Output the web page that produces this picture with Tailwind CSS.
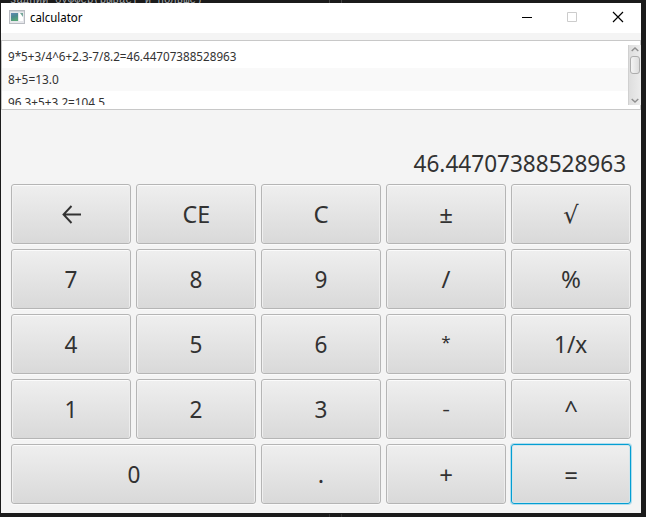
<!DOCTYPE html>
<html lang="en">
<head>
<meta charset="utf-8">
<title>calculator</title>
<script src="https://cdn.jsdelivr.net/npm/@tailwindcss/browser@4"></script>
</head>
<body class="w-[646px] h-[517px] overflow-hidden bg-[#1b1b1b] font-['Noto_Sans','DejaVu_Sans',sans-serif] text-[#323232]">
<div class="relative h-[517px] pt-[3px] pl-px">
  <div class="absolute left-0 top-0 h-[3px] w-[210px] overflow-hidden whitespace-pre font-['Liberation_Mono',monospace] text-[10.7px] leading-[12px] text-[#a4a9ae]"><div class="-mt-[6px] pl-[10px]">задний буффер(рывает и польше)</div></div>
  <div class="absolute left-[329px] top-0 h-[3px] w-[13px] border-x border-[#444]"></div>
  <div class="absolute left-[329px] top-[514px] h-[3px] w-[13px] border-x border-[#333]"></div>
  <main class="relative flex h-[510px] w-[640px] flex-col bg-[#f4f4f4]">
    <header class="flex h-[30px] shrink-0 items-center bg-white pl-2 text-black">
      <svg class="mr-[5px] -mt-[2px]" width="16" height="14" viewBox="0 0 16 14">
        <defs><linearGradient id="scene" x1="0" y1="0" x2="0.3" y2="1"><stop offset="0" stop-color="#6389b6"/><stop offset=".5" stop-color="#4c8990"/><stop offset="1" stop-color="#57a477"/></linearGradient></defs>
        <rect x=".5" y=".5" width="15" height="13" fill="#e6e7eb" stroke="#b9bcc2"/>
        <rect x="1" y="1" width="14" height="1" fill="#d1d4d9"/>
        <rect x="2" y="3" width="7" height="8" fill="url(#scene)"/>
        <rect x="10" y="3" width="4" height="8" fill="#fff"/>
        <path d="M11 3h3v4z" fill="#75a799"/>
      </svg>
      <span class="origin-left scale-x-[.95] text-[12px] leading-4">calculator</span>
      <svg class="ml-auto mr-[17px] -mt-[2px]" width="103" height="12" viewBox="0 0 103 12" fill="none">
        <path d="M1 6.5h10" stroke="#000"/>
        <path d="M46.5 1.5h9v9h-9z" stroke="#ccc"/>
        <path d="M92 1l10 10M102 1L92 11" stroke="#000" stroke-width="1.2"/>
      </svg>
    </header>
    <section class="mt-[7px] flex h-[70px] shrink-0 border border-[#c8c8c8] bg-white py-1 pl-0">
      <div class="h-[60px] grow overflow-hidden text-[12px] leading-[23px]">
        <div class="h-[23px] pl-[6px]"><span class="inline-block origin-left scale-x-[.972]">9*5+3/4^6+2.3-7/8.2=46.44707388528963</span></div>
        <div class="h-[23px] bg-[#f9f9f9] pl-[6px]"><span class="inline-block origin-left scale-x-[.99]">8+5=13.0</span></div>
        <div class="h-[23px] pl-[6px]"><span class="inline-block origin-left scale-x-[.98]">96.3+5+3.2=104.5</span></div>
      </div>
      <div class="-mr-px flex h-[60px] w-[13px] shrink-0 flex-col items-center border-l border-[#d0d0d0] bg-linear-to-r from-[#dedede] to-[#ececec]">
        <svg class="mt-[2px] shrink-0" width="8" height="5" viewBox="0 0 8 5" fill="none" stroke="#8f8f8f" stroke-width="1.4"><path d="M.7 4L4 1l3.3 3"/></svg>
        <div class="mt-1 h-[18px] w-[10px] shrink-0 rounded-[3px] border border-[#adadad] bg-linear-to-r from-[#f4f4f4] to-[#dddddd]"></div>
        <svg class="mt-auto mb-[2px] shrink-0" width="8" height="5" viewBox="0 0 8 5" fill="none" stroke="#8f8f8f" stroke-width="1.4"><path d="M.7 1L4 4l3.3-3"/></svg>
      </div>
    </section>
    <div class="flex h-[74px] shrink-0 items-end justify-end pr-[15px] pb-[5px] text-[24px] leading-[33px]"><span class="origin-right scale-x-[.94]">46.44707388528963</span></div>
    <section class="ml-[10px] grid w-[620px] grid-cols-5 auto-rows-[60px] gap-[5px] text-[24px] leading-[33px] *:flex *:items-center *:justify-center *:rounded-[3px] *:border *:border-[#b5b5b5] *:bg-linear-to-b *:from-[#efefef] *:to-[#d9d9d9] *:pb-[2px] *:shadow-[inset_0_1px_#fbfbfb,inset_1px_0_#f0f0f0,inset_-1px_0_#ededed,0_1px_#fafafa]">
      <button><svg class="mt-[2px] ml-px" width="20" height="20" viewBox="0 0 20 20" fill="none" stroke="#323232" stroke-width="1.9"><path d="M19 10.5H2M9.5 2L1.5 10.5l8 8.5"/></svg></button>
      <button><span class="scale-x-[.97]">CE</span></button>
      <button><span>C</span></button>
      <button><span>±</span></button>
      <button><span>√</span></button>
      <button><span class="scale-x-[.94]">7</span></button>
      <button><span class="scale-x-[.94]">8</span></button>
      <button><span class="scale-x-[.94]">9</span></button>
      <button><span>/</span></button>
      <button><span>%</span></button>
      <button><span class="scale-x-[.94]">4</span></button>
      <button><span class="scale-x-[.94]">5</span></button>
      <button><span class="scale-x-[.94]">6</span></button>
      <button><span class="-mt-[4px] text-[17px]">*</span></button>
      <button><span class="scale-x-[.94]">1/x</span></button>
      <button><span class="scale-x-[.94]">1</span></button>
      <button><span class="scale-x-[.94]">2</span></button>
      <button><span class="scale-x-[.94]">3</span></button>
      <button><span class="mt-px scale-y-[.75]">-</span></button>
      <button><span>^</span></button>
      <button class="col-span-2"><span class="scale-x-[.94]">0</span></button>
      <button><span>.</span></button>
      <button><span class="mt-[2px]">+</span></button>
      <button class="border-[#039ed3]! shadow-[0_0_0_1px_#b0dcec,inset_0_0_0_1px_#d3e5eb]!"><span class="mt-[2px]">=</span></button>
    </section>
  </main>
</div>
</body>
</html>
